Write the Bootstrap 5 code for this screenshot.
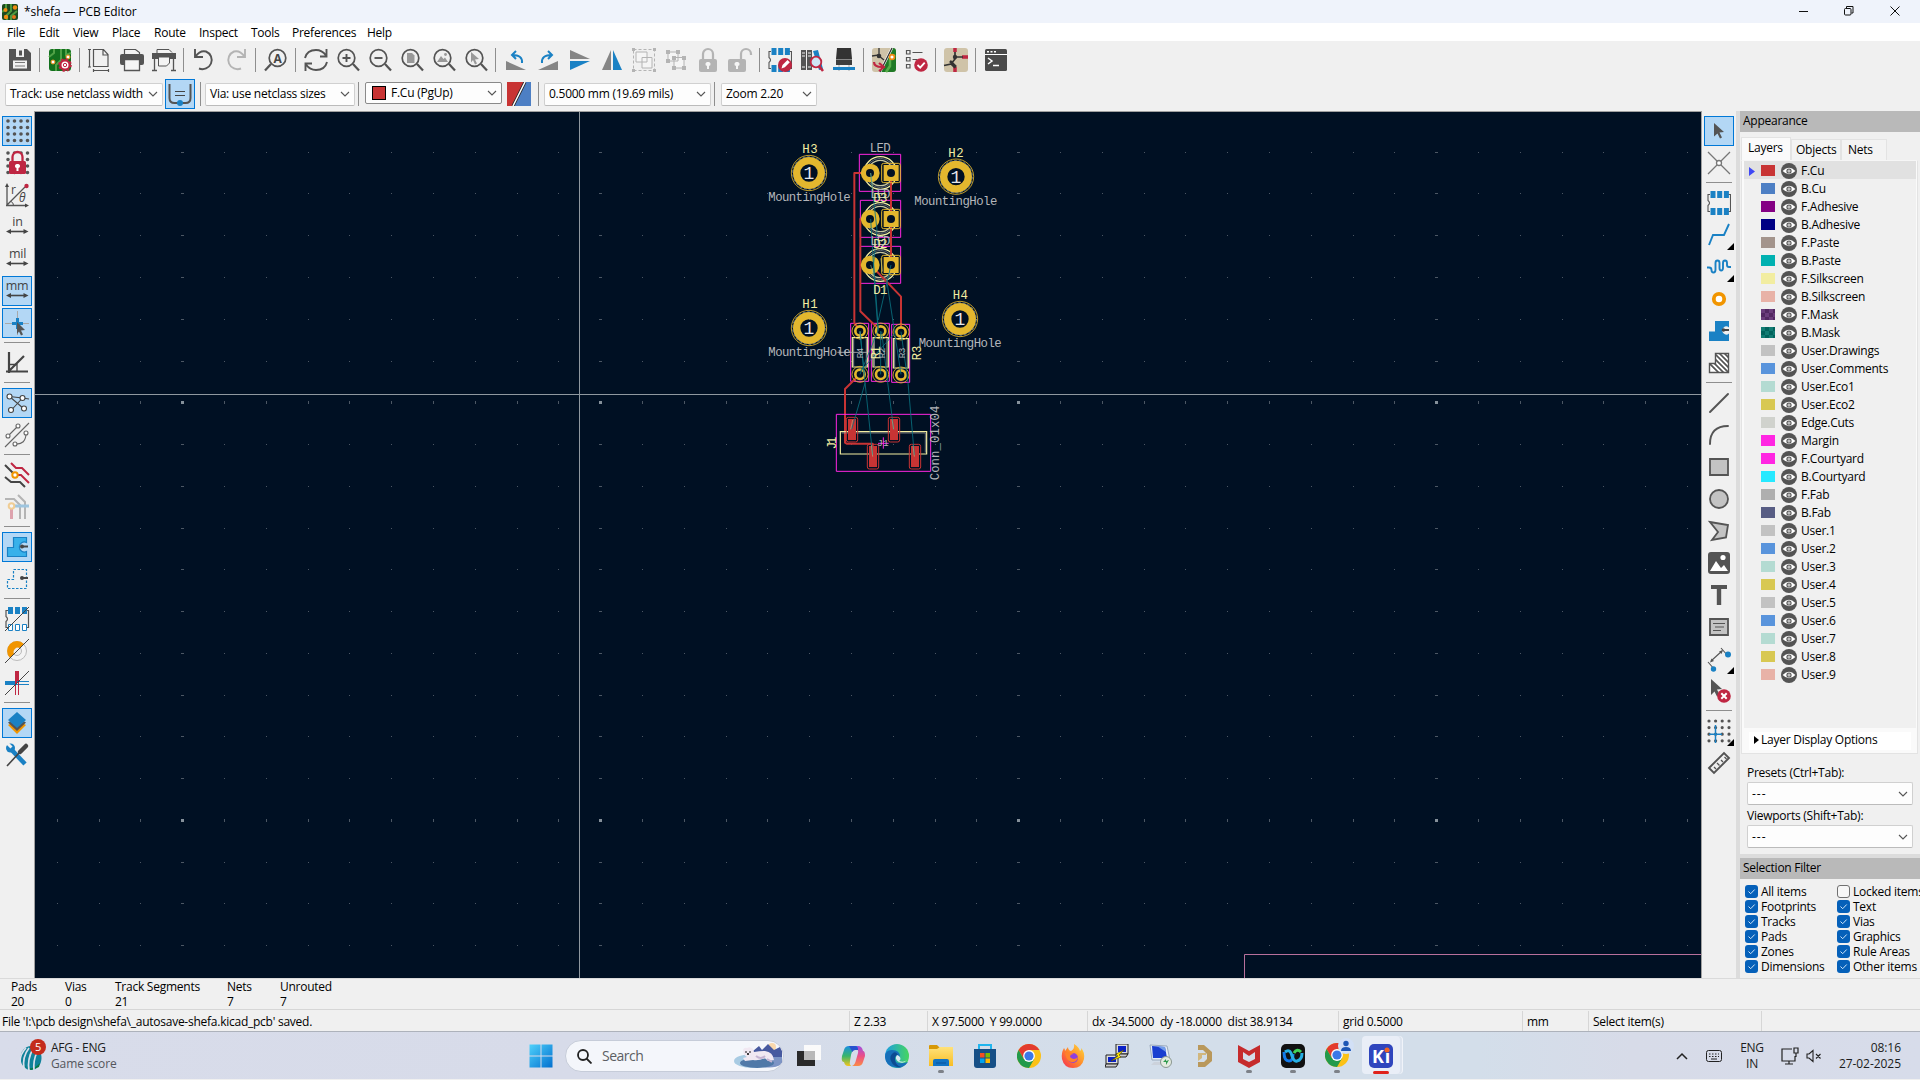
<!DOCTYPE html>
<html lang="en">
<head>
<meta charset="utf-8">
<title>*shefa — PCB Editor</title>
<link href="https://cdn.jsdelivr.net/npm/bootstrap@5.3.0/dist/css/bootstrap.min.css" rel="stylesheet">
<style>
*{box-sizing:border-box}
body{font-family:"Open Sans","Noto Sans",sans-serif;font-size:12px;line-height:16px;color:#000;background:#f0f0f0;width:1920px;height:1080px;overflow:hidden;letter-spacing:-.25px}
svg{display:block;flex:none}
.tool svg{overflow:visible}
.titlebar{height:23px;background:#eff3fb;padding-left:2px}
.titlebar span{margin-left:6px;letter-spacing:-.1px}
.menubar{height:18px;background:#fff;padding:2px 0 0 7px}
.tb-top{height:39px;padding:0 0 2px 4px}
.tb-opts{height:31px;padding:0 0 3px 5px}
.tool{width:32px;height:32px;display:flex;align-items:center;justify-content:center;flex:none}
.dim{opacity:.38}
.vsep{width:8px;flex:none;height:24px;background:linear-gradient(#8e8e8e,#8e8e8e) 3px 0/1px 100% no-repeat}
.hsep{height:8px;width:26px;flex:none;background:linear-gradient(#8e8e8e,#8e8e8e) 0 3px/100% 1px no-repeat}
.lit{background:#b3d7f5;border:1px solid #0078d7;width:30px;height:30px;margin:1px}
.combo{height:23px;background:#fdfdfd;border:1px solid #d0d0d0;border-bottom-color:#bbb;border-radius:2px;padding:0 4px;flex:none;display:flex;align-items:center;justify-content:space-between}
.dashes{letter-spacing:1px}
.work{height:867px}
.leftbar{width:34px;padding-top:4px;align-items:center}
.board{width:1668px;height:868px;border:1px solid #a0a0a0;border-bottom-color:#b5b5b5;background:#001023;flex:none}
.rightbar{width:34px;padding-top:4px;align-items:center}
.rightbar .tool,.leftbar .tool{position:relative}
.more{position:absolute;right:1px;bottom:1px;width:7px;height:7px;background:#000;clip-path:polygon(100% 0,100% 100%,0 100%)}
.sash{width:4px;background:#dcdcdc}
.dock{width:180px}
.dockhead{height:21px;background:#b9b9b9;padding-left:3px;flex:none;line-height:20px}
.tabrow{height:28px;padding:5px 0 0 1px;align-items:flex-end}
.tabx{border:1px solid #e3e3e3;border-bottom:0;height:21px;background:#f3f3f3;padding:2px 0 0 4px}
.tabx.on{background:#fafafa;height:23px;padding:2px 0 0 6px}
.tabbody{margin-left:1px;width:177px;height:594px;background:#fafafa;border:1px solid #e3e3e3;border-top-color:#f6f6f6;padding:0 1px 0 2px}
.layerlist{height:567px;background:#f0f0f0}
.layer{height:18px;padding:2px 0 0 5px}
.layer.on{background:#e1e1e1}
.layer .arrow{width:12px}
.swatch{width:14px;height:11px;margin-right:6px;margin-bottom:2px}
.layer .eye{margin-right:4px}
.ldo{margin:4px 5px 0 5px;height:18px;background:#fff;padding:0 0 2px 5px}
.filter{height:15px}
.filter .half{width:92px;white-space:nowrap;flex:none}
.tick{width:13px;height:13px;border-radius:3px;background:#0560b9;margin-right:3px;flex:none}
.tick.off{background:#f7f7f7;border:1px solid #707070}
.infobar{height:31px;border-top:1px solid #dadada;position:relative;z-index:1;background:#f0f0f0;padding-left:11px;line-height:14.500px;padding-top:1px}
.statusbar{height:23px;border-top:1px solid #d6d6d6;border-bottom:1px solid #adb2bb;line-height:21px}
.statusbar div{border-right:1px solid #d6d6d6;padding-left:4px;margin:1px 0;height:20px;white-space:pre;flex:none;line-height:22px}
.statusbar div:first-child{padding-left:2px}
.taskbar{height:47px;background:linear-gradient(90deg,#d8dcea 0,#d7dbe9 30%,#d3deea 60%,#d3deea 77%,#d7dbe8 85%,#d7dcea 100%);color:#1b1c20}
.weather{width:519px;padding-left:19px}
.app{width:44px;height:47px;display:flex;align-items:center;justify-content:center;position:relative;flex:none}
.app.run::after{content:"";position:absolute;left:19px;bottom:6px;width:6px;height:3px;border-radius:2px;background:#7d8188}
.app.active::before{content:"";position:absolute;left:3px;top:4px;width:38px;height:38px;border-radius:4px;background:#e9eef7;box-shadow:2px 0 #dde4ef,3px 0 #f0f3f9}
.app.active::after{content:"";position:absolute;left:14px;bottom:5px;width:16px;height:3px;border-radius:2px;background:#e0231c}
.app svg{position:relative}
.searchbox{width:219px;height:32px;border-radius:16px;background:#f4f6fb;border:1px solid #c6ccd9;margin:0 3px 0 2px;padding:0 1px 0 11px;color:#5c5e63;font-size:14px;overflow:hidden;letter-spacing:-.5px}
.tray{margin-left:auto;padding-right:19px}
.pcb{font-family:"Liberation Mono",monospace;font-size:37px;letter-spacing:0}
</style>
</head>
<body class="d-flex flex-column">
<svg width="0" height="0" class="position-absolute">
<defs>
<symbol id="eye" viewBox="0 0 16 16"><circle cx="8" cy="8" r="8" fill="#545454"/><path d="M1.600 8Q8 1.600 14.400 8Q8 14.400 1.600 8z" fill="#fff"/><circle cx="8" cy="8" r="2.600" fill="#545454"/><circle cx="8" cy="8" r="1.500" fill="#e8e8e8"/><circle cx="8" cy="8" r=".700" fill="#777"/></symbol>
<symbol id="caret" viewBox="0 0 10 10"><path d="M1 3l4 4 4-4" fill="none" stroke="#555" stroke-width="1.100"/></symbol>
<symbol id="lens" viewBox="0 0 24 24"><circle cx="10.500" cy="10" r="8.300" fill="none" stroke="#545454" stroke-width="1.700"/><path d="M17 16l6 6.500" stroke="#545454" stroke-width="2.200"/></symbol>
<symbol id="chip" viewBox="0 0 24 24"><path d="M3 3.500H1V9.500Q4 12 1 14.500V20.500H3M21 3.500H23.500V20.500H21" fill="none" stroke="#545454" stroke-width="1.100"/><path d="M3.500 0h5v7h-5zM10.200 0h5v7h-5zM16.900 0h5v7h-5zM3.500 17h5v7h-5zM10.200 17h5v7h-5zM16.900 17h5v7h-5z" fill="#1a81c4"/></symbol>
<symbol id="chrome" viewBox="0 0 24 24"><circle cx="12" cy="12" r="12" fill="#fbc116"/><path d="M1.600 6A12 12 0 0 1 22.400 6H12L6.800 15z" fill="#e33b2e"/><path d="M1.600 6A12 12 0 0 0 12 24L17.200 15 12 12 6.800 15z" fill="#229a4b"/><circle cx="12" cy="12" r="5.900" fill="#fff"/><circle cx="12" cy="12" r="4.600" fill="#3b78e7"/></symbol>
<linearGradient id="win" x2="1" y2="1"><stop stop-color="#4fd1fb"/><stop offset="1" stop-color="#0370cf"/></linearGradient>
<linearGradient id="edge" x2="1" y2="0"><stop stop-color="#1b9de2"/><stop offset="1" stop-color="#46d65f"/></linearGradient>
<linearGradient id="fold" x2="0" y2="1"><stop stop-color="#ffe27a"/><stop offset="1" stop-color="#f8bd24"/></linearGradient>
<linearGradient id="cpa" x2="0" y2="1"><stop stop-color="#1b8fe3"/><stop offset=".5" stop-color="#38b56a"/><stop offset="1" stop-color="#f5c51c"/></linearGradient>
<linearGradient id="cpb" x2="0" y2="1"><stop stop-color="#a04fe0"/><stop offset=".5" stop-color="#ec4f87"/><stop offset="1" stop-color="#fb8b45"/></linearGradient>
<linearGradient id="fox" x1="1" x2="0" y2="1"><stop stop-color="#ffdf3c"/><stop offset=".5" stop-color="#ff8a2b"/><stop offset="1" stop-color="#f52a56"/></linearGradient>
</defs>
</svg>

<header class="titlebar d-flex align-items-center">
<svg width="16" height="16" viewBox="0 0 16 16"><rect width="16" height="16" rx="2" fill="#1d4a1f"/><path d="M5 16V11L9 7V0M9 16V12L15 7M0 8L4 5V0" fill="none" stroke="#4c9a3f" stroke-width="2"/><circle cx="3.500" cy="6" r="2" fill="#f08c12"/><circle cx="13" cy="3.500" r="2.200" fill="#f08c12"/><circle cx="4" cy="13" r="2.200" fill="#f08c12"/><circle cx="12" cy="13" r="2" fill="#e2741a"/></svg>
<span>*shefa — PCB Editor</span>
<svg class="ms-auto me-3" width="110" height="20" viewBox="0 0 110 20" fill="none" stroke="#111" stroke-width="1"><path d="M5 9.500h9M96.500 4.500l9 9M105.500 4.500l-9 9"/><rect x="50.500" y="6.500" width="6.500" height="6.500" rx="1"/><path d="M52.500 6V4.500h6.500v6.500H57.500"/></svg>
</header>
<nav class="menubar d-flex align-items-center" id="menubar"></nav>

<section class="tb-top d-flex align-items-center" aria-label="Main toolbar">
<div class="tool"><svg width="24" height="24" viewBox="0 0 24 24"><path d="M1 1h18l4 4v18H1z" fill="#545454"/><path d="M8 1h8v8H8z" fill="#f0f0f0"/><path d="M11 2.500h3v5h-3z" fill="#545454"/><path d="M5 12.500h14v8H5z" fill="#f0f0f0"/><path d="M7 14.500h10M7 18h10" stroke="#777"/></svg></div>
<div class="vsep"></div>
<div class="tool"><svg width="24" height="24" viewBox="0 0 24 24"><rect x="1" y="1" width="22" height="22" rx="3" fill="#12701d"/><path d="M8 23v-6l5-5V1M1 9l5-4V1M18 1v6l5-2" fill="none" stroke="#4fa146" stroke-width="2"/><circle cx="5" cy="14" r="2" fill="#fff" stroke="#f08a12"/><circle cx="20" cy="9" r="2" fill="#fff" stroke="#f08a12"/><circle cx="17" cy="17" r="4.600" fill="#fff" stroke="#bf2642" stroke-width="2.200"/><circle cx="17" cy="17" r="5.800" fill="none" stroke="#bf2642" stroke-width="2" stroke-dasharray="2.300 2.250"/><circle cx="17" cy="17" r="1.700" fill="none" stroke="#bf2642"/></svg></div>
<div class="vsep"></div>
<div class="tool"><svg width="24" height="24" viewBox="0 0 24 24" fill="none" stroke="#545454" stroke-width="1.200"><path d="M5.500 1.500h10l4.500 5v12h-14.500zM15 1.500v5.500h5M1.500 1v18M0 1.500h3M0 19h3M5.500 22.500h15M5.500 21v3M20.500 21v3"/></svg></div>
<div class="tool"><svg width="24" height="24" viewBox="0 0 24 24"><path d="M4.500 6V1.500h11l4 3V6" fill="#f4f4f4" stroke="#545454" stroke-width="1.200"/><rect y="6" width="24" height="11" rx="2" fill="#545454"/><path d="M4.500 11.500h15V22.500h-15z" fill="#f4f4f4" stroke="#545454" stroke-width="1.300"/></svg></div>
<div class="tool"><svg width="24" height="24" viewBox="0 0 24 24"><path d="M5 5V1.500h12l3 3" fill="#f4f4f4" stroke="#545454"/><path d="M0 5h24v6H0z" fill="#545454"/><path d="M2.500 10v13M21.500 10v13M0 22.500h5M19 22.500h5" stroke="#545454" stroke-width="1.300"/><path d="M6.500 9h11v6l-3 3h-8z" fill="#f4f4f4" stroke="#545454"/></svg></div>
<div class="vsep"></div>
<div class="tool"><svg width="24" height="24" viewBox="0 0 24 24" fill="none" stroke="#545454" stroke-width="1.900"><path d="M3 1v8h8M3.500 8.500Q8 2 14 3.500A8.600 8.600 0 1 1 7 20.500"/></svg></div>
<div class="tool dim"><svg width="24" height="24" viewBox="0 0 24 24" fill="none" stroke="#545454" stroke-width="1.900"><path d="M21 1v8h-8M20.500 8.500Q16 2 10 3.500A8.600 8.600 0 1 0 17 20.500"/></svg></div>
<div class="vsep"></div>
<div class="tool"><svg width="24" height="24" viewBox="0 0 24 24"><g transform="matrix(-1 0 0 1 24 0)"><use href="#lens" width="24" height="24"/></g><text x="13.500" y="14.500" text-anchor="middle" font-size="12" font-weight="700" fill="#444">A</text></svg></div>
<div class="vsep"></div>
<div class="tool"><svg width="24" height="24" viewBox="0 0 24 24" fill="none" stroke="#545454" stroke-width="1.900"><path d="M1 10Q3 2 12 2Q18 2 22 7.500M22.500 1v7.500H16M23 14Q21 22 12 22Q6 22 2 16.500M1.500 23v-7.500H8"/></svg></div>
<div class="tool"><svg width="24" height="24"><use href="#lens"/><path d="M6.500 10h8M10.500 6v8" stroke="#545454" stroke-width="1.900"/></svg></div>
<div class="tool"><svg width="24" height="24"><use href="#lens"/><path d="M6.500 10h8" stroke="#545454" stroke-width="1.900"/></svg></div>
<div class="tool"><svg width="24" height="24"><use href="#lens"/><path d="M7 5h5l2.500 2.500V15H7z" fill="#999"/></svg></div>
<div class="tool"><svg width="24" height="24"><use href="#lens"/><path d="M5 14l4-6 2.500 3 1.500-1.500L16 14z" fill="#999"/><circle cx="13.500" cy="6.500" r="1.400" fill="#999"/></svg></div>
<div class="tool"><svg width="24" height="24"><use href="#lens"/><path d="M7 4l8 7-4 .5 2 4-2 1-2-4.500-2 2.500z" fill="#999"/></svg></div>
<div class="vsep"></div>
<div class="tool"><svg width="24" height="24" viewBox="0 0 24 24"><path d="M2 13l20 9H2z" fill="#858585"/><path d="M18 15Q19 7 8 7M12 3L8 7l4 4" fill="none" stroke="#1a81c4" stroke-width="2"/></svg></div>
<div class="tool"><svg width="24" height="24" viewBox="0 0 24 24"><path d="M22 13L2 22h20z" fill="#858585"/><path d="M6 15Q5 7 16 7M12 3l4 4-4 4" fill="none" stroke="#1a81c4" stroke-width="2"/></svg></div>
<div class="tool"><svg width="24" height="24" viewBox="0 0 24 24"><path d="M2 2l20 9H2z" fill="#858585"/><path d="M2 22l20-9H2z" fill="#1a81c4"/></svg></div>
<div class="tool"><svg width="24" height="24" viewBox="0 0 24 24"><path d="M2 22L11 2v20z" fill="#858585"/><path d="M22 22L13 2v20z" fill="#1a81c4"/></svg></div>
<div class="tool dim"><svg width="24" height="24" viewBox="0 0 24 24" stroke="#545454"><path d="M1.500 1.500h21v21h-21z" fill="none" stroke-dasharray="3 2"/><path d="M4 4h11v10H4zM10 9.500h10V20H10z" fill="#fff"/><path d="M0 0h3v3H0zM21 0h3v3h-3zM0 21h3v3H0zM21 21h3v3h-3z" fill="#545454" stroke="none"/></svg></div>
<div class="tool dim"><svg width="24" height="24" viewBox="0 0 24 24" stroke="#545454"><path d="M4 4h10v9H4zM10 9.500h10V20H10z" fill="#fff"/><path d="M2 2h4v4H2zM12 2h4v4h-4zM2 11h4v4H2zM8 8h4v4H8zM18 8h4v4h-4zM8 18h4v4H8zM18 18h4v4h-4z" fill="#545454" stroke="none"/></svg></div>
<div class="tool dim"><svg width="24" height="24" viewBox="0 0 24 24"><path d="M7 12V6a5 5 0 0 1 10 0v6" fill="none" stroke="#545454" stroke-width="2.200"/><rect x="3" y="11" width="18" height="13" rx="2" fill="#545454"/><path d="M12 14a2 2 0 0 1 1 4v3h-2v-3a2 2 0 0 1 1-4" fill="#fff"/></svg></div>
<div class="tool dim"><svg width="24" height="24" viewBox="0 0 24 24"><path d="M13 12V6a5 5 0 0 1 10 0v1" fill="none" stroke="#545454" stroke-width="2.200"/><rect x="0" y="11" width="18" height="13" rx="2" fill="#545454"/><path d="M9 14a2 2 0 0 1 1 4v3H8v-3a2 2 0 0 1 1-4" fill="#fff"/></svg></div>
<div class="vsep"></div>
<div class="tool"><svg width="24" height="24" viewBox="0 0 24 24"><use href="#chip"/><circle cx="17" cy="17" r="7" fill="#bf2642"/><path d="M13.500 20.500l1-3.500 5-5 2.300 2.300-5 5z" fill="#fff"/></svg></div>
<div class="tool"><svg width="24" height="24" viewBox="0 0 24 24"><path d="M1 2h5v20H1zM7 2h5v20H7z" fill="#545454"/><path d="M2 5h3M2 8h3M8 5h3M8 8h3M2 19h3M8 19h3" stroke="#eee"/><path d="M13 3l5-1 5 19-4 1z" fill="#1a81c4"/><circle cx="16" cy="14" r="5.300" fill="#cfe6f5" stroke="#bf2642" stroke-width="1.800"/><path d="M19 18l4 5" stroke="#bf2642" stroke-width="2.600"/></svg></div>
<div class="tool"><svg width="24" height="24" viewBox="0 0 24 24"><path d="M7 17v6M17 17v6" stroke="#aaa"/><path d="M5 0h14l1 11H4z" fill="#333"/><path d="M4 11h16v6H4z" fill="#3d3d3d"/><path d="M4 11.500h16" stroke="#888"/><path d="M1 19h22v3H1z" fill="#1a81c4"/></svg></div>
<div class="vsep"></div>
<div class="tool"><svg width="24" height="24" viewBox="0 0 24 24"><rect width="24" height="24" rx="3" fill="#cfc3a8"/><path d="M20 0h1a3 3 0 0 1 3 3v18a3 3 0 0 1-3 3H8z" fill="#1f7a26"/><path d="M14 24l4-6v-7l5-4" fill="none" stroke="#58ad4a" stroke-width="2.500"/><path d="M20 0L8 24" stroke="#fff" stroke-width="2.500"/><path d="M20 0L8 24M7 0v7l-7 1M7 8l5 4" fill="none" stroke="#333" stroke-width="1.300"/><circle cx="7" cy="8" r="2.300" fill="#333"/><circle cx="20" cy="9" r="2.400" fill="#fff" stroke="#f08a12" stroke-width="1.700"/><path d="M2 14q0 5 8 5M7 15l5 4-5 4" fill="none" stroke="#bf2642" stroke-width="2.200"/></svg></div>
<div class="tool"><svg width="24" height="24" viewBox="0 0 24 24"><path d="M2.500 2.500h3.500v3.500H2.500zM2.500 9.500h3.500v3.500H2.500zM2.500 16.500h3.500v3.500H2.500zM8.500 4.500h10M8.500 11.500h5" fill="none" stroke="#545454" stroke-width="1.200"/><circle cx="17" cy="17" r="6.800" fill="#bf2642"/><path d="M13.500 17l2.700 2.700 4.500-5" fill="none" stroke="#fff" stroke-width="1.800"/></svg></div>
<div class="vsep"></div>
<div class="tool"><svg width="24" height="24" viewBox="0 0 24 24"><rect width="24" height="24" rx="3" fill="#cfc3a8"/><path d="M11 0v4M18 9h6M11 19v5" fill="none" stroke="#bf2642" stroke-width="3.500"/><path d="M11 4v7L7 16 0 17.500M7 16l4 4M11 9h8" fill="none" stroke="#333" stroke-width="1.700"/><circle cx="11" cy="9" r="2.200" fill="#333"/><path d="M6 13l6 6" stroke="#333" stroke-width="2.500"/></svg></div>
<div class="vsep"></div>
<div class="tool"><svg width="24" height="24" viewBox="0 0 24 24"><rect x="1" y="1" width="22" height="22" rx="1.500" fill="#4a4a4a"/><path d="M3 3h2v1.500H3zM6.500 3h2v1.500h-2zM10 3h2v1.500h-2zM1 6h22v1H1z" fill="#fff"/><path d="M4 10l4 3-4 3M9 17.500h6" fill="none" stroke="#fff" stroke-width="1.500"/></svg></div>
</section>

<section class="tb-opts d-flex align-items-center" aria-label="Track options">
<div class="combo" style="width:158px"><span>Track: use netclass width</span><svg width="10" height="10"><use href="#caret"/></svg></div>
<div class="tool lit" style="margin:0 0 0 2px"><svg width="24" height="24" viewBox="0 0 24 24"><path d="M1.500 2v14q0 5 5 5h11q5 0 5-5V2" fill="none" stroke="#545454" stroke-width="2"/><path d="M7 9.500h10M7 13.500h10" stroke="#444"/><circle cx="12" cy="21" r="3" fill="#1a81c4"/></svg></div>
<div class="vsep" style="margin-left:2px"></div><div class="combo" style="width:150px"><span>Via: use netclass sizes</span><svg width="10" height="10"><use href="#caret"/></svg></div>
<div class="vsep"></div>
<div class="combo" style="width:137px;margin-left:2px;border-color:#8a8a8a;padding-left:6px;height:22px;margin-bottom:2px"><span class="d-flex align-items-center"><i style="width:14px;height:14px;background:#c83434;border:1px solid #000;margin-right:5px"></i>F.Cu (PgUp)</span><svg width="10" height="10"><use href="#caret"/></svg></div>
<svg width="24" height="24" viewBox="0 0 24 24" style="margin:0 4px 0 5px"><path d="M0 0h24v24H0z" fill="#4d7fc4"/><path d="M0 0h18L6 24H0z" fill="#c83434"/><path d="M18 0L6 24" stroke="#222" stroke-width="3"/><path d="M18 0L6 24" stroke="#fff" stroke-width="1.500"/></svg>
<div class="vsep"></div><div class="combo" style="width:167px;margin-left:1px"><span>0.5000 mm (19.69 mils)</span><svg width="10" height="10"><use href="#caret"/></svg></div>
<div class="vsep"></div><div class="combo" style="width:96px;margin-left:2px"><span>Zoom 2.20</span><svg width="10" height="10"><use href="#caret"/></svg></div>
</section>

<main class="work d-flex">
<aside class="leftbar d-flex flex-column">
<div class="tool lit"><svg width="24" height="24"><path d="M3 2v22M9.500 2v22M16 2v22M22.500 2v22" fill="none" stroke="#545454" stroke-width="3.600" stroke-linecap="round" stroke-dasharray="0 6.500"/></svg></div>
<div class="tool"><svg width="24" height="24"><path d="M3 2v22M9.500 2v22M16 2v22M22.500 2v22" stroke="#545454" stroke-width="3.600" stroke-linecap="round" stroke-dasharray="0 6.500"/><path d="M7.500 10V6a5 5 0 0 1 10 0v4" fill="#f0f0f0" stroke="#bf2642" stroke-width="2.300"/><rect x="4" y="10" width="17" height="13" rx="1.500" fill="#bf2642"/><path d="M12.500 13a2 2 0 0 1 1 4v3h-2v-3a2 2 0 0 1 1-4" fill="#fff"/></svg></div>
<div class="tool"><svg width="24" height="24"><path d="M2 23V3M1 22.500h21M2 22L20 4" stroke="#545454" stroke-width="1.300"/><path d="M2 0l2 4H0zM24 22.500l-4-2v4z" fill="#444"/><path d="M6 18.500q2.500 1 2.500 4" fill="none" stroke="#545454"/><circle cx="21.500" cy="3" r="2.200" fill="#bf2642"/><text x="6" y="11" font-size="12" fill="#444">r</text><text x="14" y="19" font-size="12" font-style="italic" fill="#444">θ</text></svg></div>
<div class="tool"><svg width="24" height="24"><text x="12.500" y="11" text-anchor="middle" font-size="12.500" fill="#444">in</text><path d="M4 16.500h17" stroke="#444" stroke-width="1.600"/><path d="M1 16.500l5-2.500v5zM23.500 16.500l-5-2.500v5z" fill="#444"/></svg></div>
<div class="tool"><svg width="24" height="24"><text x="12.500" y="11" text-anchor="middle" font-size="12.500" fill="#444">mil</text><path d="M4 16.500h17" stroke="#444" stroke-width="1.600"/><path d="M1 16.500l5-2.500v5zM23.500 16.500l-5-2.500v5z" fill="#444"/></svg></div>
<div class="tool lit"><svg width="24" height="24"><text x="12" y="11" text-anchor="middle" font-size="12.500" fill="#444">mm</text><path d="M4 16.500h17" stroke="#444" stroke-width="1.600"/><path d="M1 16.500l5-2.500v5zM23.500 16.500l-5-2.500v5z" fill="#444"/></svg></div>
<div class="tool lit"><svg width="24" height="24"><path d="M12.500 0v24M0 12.500h24" stroke="#a8a8a8"/><path d="M12.500 7v11M7 12.500h11" stroke="#1a81c4" stroke-width="3"/><path d="M12 11l8 8-4 .500 2 4-2 1-2-4-2 2.500z" fill="#545454"/></svg></div>
<div class="hsep"></div>
<div class="tool"><svg width="24" height="24" fill="none" stroke="#444"><path d="M4 1v21M1 20.500h22M4 20L19 5" stroke-width="2.200"/><path d="M4 13.500h8v7" stroke-width="1.300"/></svg></div>
<div class="hsep"></div>
<div class="tool lit"><svg width="24" height="24" fill="#fff" stroke="#444" stroke-width="1.100"><path d="M4.500 5.500L17.500 7l6.500 1M4.500 5.500L18.500 17.500M17.500 7L6 19.500" fill="none"/><circle cx="4.500" cy="5.500" r="2.500"/><circle cx="17.500" cy="7" r="2.500"/><circle cx="19" cy="17.500" r="2.500"/><circle cx="6" cy="19" r="2.500"/></svg></div>
<div class="tool"><svg width="24" height="24" fill="#fff" stroke="#666" stroke-width="1.100"><path d="M0 24L24 0M3 13L13 3M10 21Q21 22 21 10" fill="none"/><circle cx="3" cy="13" r="2"/><circle cx="13" cy="3" r="2"/><circle cx="21" cy="10" r="2"/><circle cx="10" cy="21" r="2"/></svg></div>
<div class="hsep"></div>
<div class="tool"><svg width="24" height="24" fill="none" stroke-width="2"><path d="M0 2l10 10M0 14l6 5h9l5 5" stroke="#444"/><path d="M6 0l5 5h6l7 7M10 12h6l8 8" stroke="#bf2642"/><circle cx="10" cy="12" r="2.700" fill="#fff" stroke="#f19500"/></svg></div>
<div class="tool dim"><svg width="24" height="24" fill="none" stroke-width="2"><path d="M0 4h9l6 6v14M13 0l7 7v17" stroke="#545454"/><path d="M8 11h16" stroke="#1a81c4" stroke-width="3"/><path d="M6.500 12v12" stroke="#bf2642" stroke-width="3"/><circle cx="6.500" cy="11" r="2.800" fill="#fff" stroke="#f19500"/></svg></div>
<div class="hsep"></div>
<div class="tool lit"><svg width="24" height="24"><path d="M8.500 2.500h13v5a5 5 0 1 0 0 9v5h-19v-9h6z" fill="#38b1ea" stroke="#1a81c4" stroke-width="1.200"/><path d="M17 11.500h6" stroke="#444" stroke-width="2"/><circle cx="17" cy="11.500" r="2" fill="#444"/></svg></div>
<div class="tool"><svg width="24" height="24"><path d="M8.500 2.500h13v19h-19v-9h6z" fill="none" stroke="#1a81c4" stroke-width="1.200" stroke-dasharray="2.500 1.500"/><path d="M17 11h6" stroke="#444" stroke-width="2"/><circle cx="17" cy="11" r="2" fill="#444"/></svg></div>
<div class="hsep"></div>
<div class="tool"><svg width="24" height="24"><path d="M3 3.500H1v6q3 2.500 0 5V20.500h2M21 3.500h2.500v17H21" fill="none" stroke="#545454" stroke-width="1.200"/><path d="M3 0h5v7H3zM10 0h5v7h-5zM17 0h5v7h-5z" fill="#1a81c4"/><path d="M3.500 17.500h4v6h-4zM10.500 17.500h4v6h-4zM17.500 17.500h4v6h-4z" fill="#fff" stroke="#1a81c4"/><path d="M0 24L24 0" stroke="#444"/></svg></div>
<div class="tool"><svg width="24" height="24"><circle cx="12" cy="12" r="9.500" fill="#f4f4f4" stroke="#bbb"/><circle cx="12" cy="12" r="4.500" fill="#f0f0f0" stroke="#bbb"/><path d="M5 19A9.800 9.800 0 0 1 19 5L15 9a4.500 4.500 0 0 0-6 6z" fill="#f19500"/><path d="M0 24L24 0" stroke="#444"/></svg></div>
<div class="tool"><svg width="24" height="24"><path d="M0 12h12" stroke="#1a81c4" stroke-width="4"/><path d="M12 0v12" stroke="#bf2642" stroke-width="4"/><path d="M12 10.500h12M12 13.500h12" stroke="#1a81c4"/><path d="M10.500 12v12M13.500 12v12" stroke="#bf2642"/><path d="M0 24L24 0" stroke="#444"/></svg></div>
<div class="hsep"></div>
<div class="tool lit"><svg width="24" height="24"><path d="M3 14l9 9 9-9-9-5z" fill="#f19500"/><path d="M3 11.500l9 8.500 9-8.500-9-5z" fill="#545454"/><path d="M12 1l9 8-9 8-9-8z" fill="#1a81c4"/></svg></div>
<div class="tool"><svg width="24" height="24"><path d="M4 4l16 17" stroke="#1a81c4" stroke-width="4.500"/><circle cx="5.500" cy="5" r="4.500" fill="#1a81c4"/><path d="M2 0l4.500 4.500" stroke="#f0f0f0" stroke-width="3"/><path d="M2 23L14 10" stroke="#444" stroke-width="1.600"/><path d="M15 9l6-6" stroke="#444" stroke-width="4.500" stroke-linecap="round"/></svg></div>
</aside>

<div class="board"><svg class="pcb" width="1666" height="866" viewBox="35 112 1666 866">
<path id="gridDots" fill="#4c5764" shape-rendering="crispEdges"/><path id="majorDots" fill="#85909a" shape-rendering="crispEdges"/>
<path d="M1244.500 978V954.500H1701" fill="none" stroke="#b8709c"/>
<path d="M35 394.500H1701M579.500 112V978" stroke="#8f989f" stroke-width="1"/>
<g transform="translate(750 130) scale(.33333)" fill="none">
 <g id="holes"></g>
 <g id="leds"></g>
 <g id="resistors"></g>
 <g stroke="#c83434" stroke-width="6" stroke-linejoin="round"><path d="M360 129H313V580L330 600M331 265V544L392 603M423 129V405M362 405L453 500V605M330 733L285 777V938L290 941H368V970"/></g>
 <g stroke="#ff26e2" stroke-width="3"><path d="M259 853H542V1024H259z"/></g>
 <g stroke="#f2eda1" stroke-width="3.500"><path d="M271 905H530V972H271z"/></g><path d="M275 909H526V968" stroke="#aaa" stroke-width="2"/>
 <g id="smd"></g>
 <g id="padsTop"></g>
 <g stroke="#0a7180" stroke-width="2.500"><path d="M362 129L381 300 371 400 385 600 330 733M362 267L375 480 384 600M423 405L385 570M410 450L453 733M432 612L330 725M330 603L345 760 305 898M345 757L368 975M395 605L413 757 431 898M392 603V733M453 605L474 757 493 975M330 603L343 733"/></g>
 <path d="M362 129L370 190M362 405L372 440M302 898L308 870M431 898L426 868M368 980L364 945M493 980L489 946M330 630V605M398 425L392 385" stroke="#b9c98a" stroke-width="2" opacity=".8"/>
 <path d="M400 922V956M384 940H416" stroke="#ff26e2" stroke-width="3"/>
 <g fill="#b4b6ba">
  <text x="359" y="67" textLength="63">LED</text><text x="361" y="205" textLength="60">LED</text><text x="361" y="344" textLength="60">LED</text>
  <text x="55" y="214" textLength="247">MountingHole</text><text x="493" y="226" textLength="249">MountingHole</text><text x="55" y="678" textLength="247">MountingHole</text><text x="506" y="652" textLength="249">MountingHole</text>
  <text transform="translate(566 1051) rotate(-90)" textLength="224">Conn_01x04</text>
  <g font-size="28"><text transform="translate(339 685) rotate(-90)" textLength="32">R4</text><text transform="translate(405 685) rotate(-90)" textLength="32">R2</text><text transform="translate(465 685) rotate(-90)" textLength="32">R3</text><path d="M262 667H352M268 660v14M286 660v14" stroke="#b4b6ba" stroke-width="2.500"/><text x="382" y="949">J1</text></g>
 </g>
 <g fill="#f2eda1">
  <text x="157" y="68" textLength="46">H3</text><text x="595" y="81" textLength="46">H2</text><text x="157" y="533" textLength="46">H1</text><text x="608" y="507" textLength="46">H4</text>
  <text x="370" y="216" textLength="42">D3</text><text x="370" y="354" textLength="42">D2</text><text x="370" y="492" textLength="42">D1</text>
  <text transform="translate(390 688) rotate(-90)" textLength="40">R1</text><text transform="translate(514 691) rotate(-90)" textLength="44">R3</text><text transform="translate(258 958) rotate(-90)" textLength="38">J1</text>
 </g>
</g></svg></div>

<aside class="rightbar d-flex flex-column">
<div class="tool lit"><svg width="24" height="24"><path d="M7 4l10 9-4.500.500 2.500 5-2 1-2.500-5-3.500 3z" fill="#545454"/></svg></div>
<div class="tool"><svg width="24" height="24" fill="none" stroke="#777" stroke-width="1.300"><path d="M1 1l9 9M23 1l-9 9M1 23l9-9M23 23l-9-9"/><circle cx="12" cy="12" r="2.500" fill="#fff"/></svg></div>
<div class="hsep"></div>
<div class="tool"><svg width="24" height="24"><use href="#chip"/></svg></div>
<div class="tool"><svg width="24" height="24"><path d="M2 22L6 12H17L22 1" fill="none" stroke="#1a81c4" stroke-width="1.900"/></svg><i class="more"></i></div>
<div class="tool"><svg width="24" height="24"><path d="M0 12.500h2q2.500 0 2.500 2.500t2 2.500 2-3V8q0-2.500 2-2.500T12.500 8v5q0 2.500 1.700 2.500T16 13V8q0-2.500 2-2.500T20 8v2q0 2 2 2h2" fill="none" stroke="#1a81c4" stroke-width="1.900"/></svg><i class="more"></i></div>
<div class="tool"><svg width="24" height="24"><circle cx="12" cy="12" r="5.200" fill="#fff" stroke="#f19500" stroke-width="3.800"/></svg></div>
<div class="tool"><svg width="24" height="24"><path d="M8 2h14v6.500a4 4 0 1 0 0 6V22H2v-9.500h6z" fill="#1a81c4"/><path d="M16 11h6" stroke="#444" stroke-width="2"/><circle cx="16.500" cy="11" r="1.800" fill="#444"/></svg></div>
<div class="tool"><svg width="24" height="24"><defs><clipPath id="zoneClip"><path d="M8.500 2.500h13v19h-19v-9h6z"/></clipPath></defs><path d="M8.500 2.500h13v19h-19v-9h6z" fill="#fff" stroke="#545454" stroke-width="1.400"/><path clip-path="url(#zoneClip)" d="M-8 2L14 24M-3 2L19 24M2 2L24 24M7 2L29 24M12 2L34 24M17 2L39 24" stroke="#545454" stroke-width="1.700"/></svg></div>
<div class="hsep"></div>
<div class="tool"><svg width="24" height="24"><path d="M3 21L21 3" stroke="#545454" stroke-width="1.900" stroke-linecap="round"/></svg></div>
<div class="tool"><svg width="24" height="24"><path d="M3 21Q3 3 21 3" fill="none" stroke="#545454" stroke-width="1.900" stroke-linecap="round"/></svg></div>
<div class="tool"><svg width="24" height="24"><path d="M3 4h18v16H3z" fill="#c3c3c3" stroke="#545454" stroke-width="1.800"/></svg></div>
<div class="tool"><svg width="24" height="24"><circle cx="12" cy="12" r="9" fill="#c3c3c3" stroke="#545454" stroke-width="1.800"/></svg></div>
<div class="tool"><svg width="24" height="24"><path d="M3 3l18 3-2 12.500L5 21l6-8z" fill="#c3c3c3" stroke="#545454" stroke-width="1.800"/></svg></div>
<div class="tool"><svg width="24" height="24"><rect x="1" y="1" width="22" height="22" rx="3" fill="#545454"/><path d="M3 20l6-10 5 7 3-3 4 6z" fill="#fff"/><circle cx="16" cy="6.500" r="2.600" fill="#fff"/></svg></div>
<div class="tool"><svg width="24" height="24"><path d="M4 2h16v4h-5.800v16H9.800V6H4z" fill="#545454"/></svg></div>
<div class="tool"><svg width="24" height="24"><path d="M3 4h18v16H3z" fill="#c3c3c3" stroke="#545454" stroke-width="1.800"/><path d="M6 8.500h12M8 12h9M6 15.500h8" stroke="#545454" stroke-width="1.100"/></svg></div>
<div class="tool"><svg width="24" height="24"><path d="M1 15l7 8M14 1l7 8M4 14L15 4" stroke="#545454" stroke-width="1.100" fill="none"/><path d="M3 15.500l1.500-4 2.500 2.500zM16 3l-4 1.500 2.500 2.500z" fill="#545454"/><circle cx="21" cy="7.500" r="3" fill="#1a81c4"/><circle cx="6.500" cy="22" r="2.700" fill="#1a81c4"/></svg><i class="more"></i></div>
<div class="tool"><svg width="24" height="24"><path d="M4 0l11 10-5 .500 3 6-3 1-2.500-5L4 16z" fill="#545454"/><circle cx="17" cy="17" r="6.800" fill="#bf2642"/><path d="M14.300 14.300l5.400 5.400M19.700 14.300l-5.400 5.400" stroke="#fff" stroke-width="2"/></svg></div>
<div class="hsep"></div>
<div class="tool"><svg width="24" height="24"><path d="M2 2v22M8.600 2v22M15.200 2v22M22 2v22" stroke="#545454" stroke-width="3.200" stroke-linecap="round" stroke-dasharray="0 6.600"/><path d="M8.500 6v18M2 15.200h13" stroke="#1a81c4" stroke-width="1.500"/></svg><i class="more"></i></div>
<div class="tool"><svg width="24" height="24"><path d="M2 17L17 2l5 5L7 22z" fill="#f0f0f0" stroke="#545454" stroke-width="1.900"/><path d="M7.500 16.500l-2-2M11 13l-2.500-2.500M14.500 9.500l-2-2M18 6.500l-2-2" stroke="#545454" stroke-width="1.300" transform="translate(1.500 1.500)"/></svg></div>
</aside>
<div class="sash"></div>
<aside class="dock d-flex flex-column">
<div class="dockhead">Appearance</div>
<div class="tabrow d-flex"><div class="tabx on" style="width:50px">Layers</div><div class="tabx" style="width:50px">Objects</div><div class="tabx" style="width:46px;padding-left:6px">Nets</div></div>
<div class="tabbody"><div class="layerlist" id="layers"></div><div class="ldo d-flex align-items-center"><svg width="5" height="8"><path d="M0 0l5 4-5 4z"/></svg><span style="margin-left:2px">Layer Display Options</span></div></div>
<div style="padding:11px 7px 0 7px;height:100px">
<div>Presets (Ctrl+Tab):</div><div class="combo" style="margin-top:1px"><span class="dashes">---</span><svg width="10" height="10"><use href="#caret"/></svg></div>
<div style="margin:3px 0 1px">Viewports (Shift+Tab):</div><div class="combo"><span class="dashes">---</span><svg width="10" height="10"><use href="#caret"/></svg></div>
</div>
<div style="height:4px;background:#dcdcdc"></div>
<div class="dockhead">Selection Filter</div>
<div id="filters" style="padding:5px 0 0 5px"></div>
</aside>
</main>

<section class="infobar d-flex">
<div style="width:54px">Pads<br>20</div><div style="width:50px">Vias<br>0</div><div style="width:112px">Track Segments<br>21</div><div style="width:53px">Nets<br>7</div><div>Unrouted<br>7</div>
</section>
<section class="statusbar d-flex"><div style="width:850px">File 'I:\pcb design\shefa\_autosave-shefa.kicad_pcb' saved.</div><div style="width:78px">Z 2.33</div><div style="width:160px">X 97.5000  Y 99.0000</div><div style="width:251px">dx -34.5000  dy -18.0000  dist 38.9134</div><div style="width:184px">grid 0.5000</div><div style="width:66px">mm</div><div style="width:173px">Select item(s)</div></section>

<footer class="taskbar d-flex align-items-center">
<div class="weather d-flex align-items-center">
<svg width="28" height="36" viewBox="0 0 28 36"><ellipse cx="12" cy="20" rx="10.500" ry="12" fill="#10829a"/><path d="M3 26Q12 35 21 25L20 29 12 32z" fill="#087b45"/><path d="M5 31Q3 19 10 10M10 33Q8 21 14 11M15 32Q14 23 18 14M1 24Q1 16 7 10" fill="none" stroke="#d9dfeb" stroke-width="1.700"/><circle cx="19" cy="9" r="8" fill="#c42b1c"/><text x="19" y="13" text-anchor="middle" font-size="11" fill="#fff">5</text></svg>
<div class="ms-1"><div>AFG - ENG</div><div style="color:#54565c;letter-spacing:-.1px">Game score</div></div></div>
<div class="app"><svg width="24" height="24"><path d="M.500.500h11v11h-11zM12.500.500h11v11h-11zM.500 12.500h11v11h-11zM12.500 12.500h11v11h-11z" fill="url(#win)"/></svg></div>
<div class="searchbox d-flex align-items-center"><svg width="15" height="16" fill="none" stroke="#222" stroke-width="1.800"><circle cx="6" cy="7" r="5"/><path d="M9.500 10.500l5 5"/></svg><span style="margin-left:10px">Search</span>
<svg class="ms-auto" width="49" height="26" viewBox="0 0 49 26"><circle cx="39" cy="4" r="4" fill="#fad8ac"/><path d="M20 8l6-5 3 4 6-6 6 6 6-3 2 4v12H20z" fill="#47599f"/><path d="M30 14h19v7q-8 5-19 3z" fill="#7d94c5"/><ellipse cx="20" cy="18" rx="19" ry="7" fill="#a8cbe3"/><ellipse cx="24" cy="20" rx="17" ry="5" fill="#5079a8"/><path d="M10 7q1-3 4-2 3-2 6 1l1 3q6-1 11-1 8 1 9 9l-6 1-3-3q-6 3-12 2l-8 1-2-3 4-1q-4-2-4-7z" fill="#f1e8f2"/><path d="M23 13q5 4 9 0M34 16l5 3" fill="none" stroke="#c5b3d2" stroke-width="2"/><circle cx="13" cy="9" r=".800"/><circle cx="17" cy="9" r=".800"/><circle cx="15" cy="11" r="1"/></svg></div>
<div class="app"><svg width="24" height="24"><path d="M7 1h17v15H7z" fill="#fafafa"/><path d="M0 7h18v15H0z" fill="#2a2a2a"/><path d="M7 7h11v9H7z" fill="#b9b9b9"/></svg></div>
<div class="app"><svg width="24" height="24"><path d="M14 2h3q4 0 5 5 2 0 2 5l-2 6q-1 4-5 4h-6q3-1 4-6l2-7q1-3-3-7z" fill="url(#cpb)"/><path d="M10 22H7q-3 0-4-4-3 0-2-6l2-6q1-4 5-4h6q3 0 3 4h-3q-3 0-4 5L9 17q-1 3 1 5z" fill="url(#cpa)"/><path d="M8 2h6q3 0 3 4h-3q-2 0-2.500 2z" fill="#2752cf"/></svg></div>
<div class="app"><svg width="24" height="24"><circle cx="12" cy="12" r="12" fill="url(#edge)"/><path d="M0 13Q0 6 7 6q8 0 8 7-3-3-5 0-1 9 13 5-6 8-14 5Q1 22 0 13" fill="#176fb9"/><path d="M8 9q-4 3-2 8 3 7 10 6-6-2-6-8 0-4 3-4-2-4-5-2" fill="#0d4b92"/><path d="M14 12q3 3 0 5 5 2 8-1-3 4-8 2-5-3-2-7z" fill="#dce8f2"/></svg></div>
<div class="app run"><svg width="24" height="24"><path d="M0 2q0-1 1-1h7l3 3v4H0z" fill="#d79806"/><path d="M0 5h8l3-2h13v19H0z" fill="url(#fold)"/><path d="M4 22v-5q0-2 2-2h12q2 0 2 2v5z" fill="#1173c4"/><path d="M7 19h10" stroke="#0a529b"/></svg></div>
<div class="app"><svg width="24" height="24"><path d="M6 6V1h12v5" fill="none" stroke="#20b5ee" stroke-width="2"/><path d="M1 5h22v16q0 3-3 3H4q-3 0-3-3z" fill="#164f86"/><path d="M7 9h4.500v4.500H7z" fill="#f25022"/><path d="M12.500 9H17v4.500h-4.500z" fill="#7fba00"/><path d="M7 14.500h4.500V19H7z" fill="#00a4ef"/><path d="M12.500 14.500H17V19h-4.500z" fill="#ffb900"/></svg></div>
<div class="app"><svg width="24" height="24"><use href="#chrome"/></svg></div>
<div class="app"><svg width="24" height="24"><path d="M13 0q5 3 6 7 2-1 1-3 4 4 3 11-2 9-11 9T1 15Q0 9 3 4q1 1 1 3l3-4q0 3 3 4 4-2 3-7z" fill="url(#fox)"/><circle cx="12" cy="14" r="5" fill="#8d3fe0"/><path d="M4 9q5-2 9 1-4 0-4 3 4 4 8 0-1 6-7 5-5-2-6-9" fill="#ff812b"/></svg></div>
<div class="app"><svg width="24" height="24"><path d="M11 0h12v10H11zM1 11h12v9H1z" fill="#ddd" stroke="#222"/><path d="M13 2h8v6h-8zM3 13h8v5H3z" fill="#0920c7"/><path d="M11 10h12l-2 3h-10zM1 20h12l-2 3H0z" fill="#ccc" stroke="#222"/><path d="M19 6l-8 4 2 2-7 5 10-4-2-2z" fill="#ffe600" stroke="#554b00" stroke-width=".600"/></svg></div>
<div class="app"><svg width="24" height="24"><path d="M1 1l17 1 3 14H3z" fill="#e7eef7" stroke="#9aa9bb"/><path d="M3 2l13 1 2 11H4z" fill="#1a3fd0"/><path d="M8 2l8 1 1 5z" fill="#729ce9"/><path d="M5 18h9v3H2z" fill="#ccd2db"/><circle cx="17" cy="18" r="5.500" fill="#e3eadf" stroke="#8a9690"/><path d="M14 18l3-3v3zM17 21l3-5-3 1z" fill="#2f9a4c"/></svg></div>
<div class="app"><svg width="24" height="24"><path d="M5 1h6l8 7v9l-7 6H5v-5h6l3-3v-5l-4-4H5z" fill="#b9985b"/><path d="M5 9h8v2H9v3l-4 3z" fill="#d1b77e"/></svg></div>
<div class="app run"><svg width="24" height="24"><path d="M1 1l11 6L23 1v17l-11 6-11-6z" fill="#c62b2c"/><path d="M6 8l6 4 6-4v7l-6 3-6-3z" fill="#d4dde9"/></svg></div>
<div class="app run"><svg width="24" height="24"><rect width="24" height="24" rx="5" fill="#111"/><g fill="none" stroke-width="3"><path d="M3 8q0 9 5 9 4 0 4-7" stroke="#147bea"/><path d="M4 8q5-4 7 4 2 6 5 5 5-1 5-8" stroke="#26b0e5"/><path d="M13 9q3-5 7-1" stroke="#42d35a"/></g></svg></div>
<div class="app run"><svg width="29" height="29" viewBox="0 0 29 29" style="left:2px;top:-3px"><use href="#chrome" x="0" y="5" width="24" height="24"/><circle cx="21" cy="8" r="8" fill="#d2e0f6"/><circle cx="21" cy="5.500" r="2.700" fill="#1d57b5"/><path d="M16 13q0-4 5-4t5 4z" fill="#1d57b5"/></svg></div>
<div class="app active"><svg width="24" height="24"><rect width="24" height="24" rx="5" fill="#2f45bd"/><text x="3" y="19" font-size="18" font-weight="700" fill="#fff" textLength="18">Ki</text><circle cx="18" cy="6" r="2.500" fill="#f06423"/></svg></div>
<div class="tray d-flex align-items-center">
<svg width="12" height="12" fill="none" stroke="#222" stroke-width="1.500"><path d="M1 9l5-5 5 5"/></svg>
<svg width="16" height="12" style="margin-left:18px" fill="none" stroke="#222"><rect x=".500" y=".500" width="15" height="11" rx="2"/><path d="M3 4h10M3 6.500h10" stroke-dasharray="1.500 1.500"/><path d="M5 9h6"/></svg>
<div class="text-center" style="margin-left:18px;width:24px">ENG<br>IN</div>
<svg width="18" height="18" style="margin-left:17px" fill="none" stroke="#222" stroke-width="1.200"><path d="M11 2H1v12h13v-5M4 17h8M8 14v3M13 1h4v5h-4zM15 6v4"/></svg>
<svg width="16" height="14" style="margin-left:7px" fill="none" stroke="#222" stroke-width="1.100"><path d="M1 5h2l4-3.500v11L3 9H1zM10 5l4.500 4.500M14.500 5L10 9.500"/></svg>
<div class="text-end" style="margin-left:16px;width:63px;letter-spacing:-.05px">08:16<br>27-02-2025</div>
</div>
</footer>

<script src="https://cdn.jsdelivr.net/npm/bootstrap@5.3.0/dist/js/bootstrap.bundle.min.js"></script>
<script>
const $ = id => document.getElementById(id);
// menu entries with the width of each cell
$('menubar').innerHTML = [['File',32],['Edit',34],['View',39],['Place',42],['Route',45],['Inspect',52],['Tools',41],['Preferences',75],['Help',40]]
  .map(([t,w]) => `<span style="width:${w}px">${t}</span>`).join('');

// layer manager
const layers = [['F.Cu','#c83434'],['B.Cu','#4d7fc4'],['F.Adhesive','#840084'],['B.Adhesive','#000084'],['F.Paste','#a3948c'],['B.Paste','#00b1b1'],['F.Silkscreen','#f2eda1'],['B.Silkscreen','#e8b2a7'],['F.Mask','#6b3d7c','#532963'],['B.Mask','#127c73','#02645d'],['User.Drawings','#c2c2c2'],['User.Comments','#5994dc'],['User.Eco1','#b4dbd2'],['User.Eco2','#d8c852'],['Edge.Cuts','#d0d2cd'],['Margin','#ff26e2'],['F.Courtyard','#ff26e2'],['B.Courtyard','#26e9ff'],['F.Fab','#afafaf'],['B.Fab','#585d84'],['User.1','#c2c2c2'],['User.2','#5994dc'],['User.3','#b4dbd2'],['User.4','#d8c852'],['User.5','#c2c2c2'],['User.6','#5994dc'],['User.7','#b4dbd2'],['User.8','#d8c852'],['User.9','#e8b2a7']];
$('layers').innerHTML = layers.map(([n,a,b],i) => `<div class="layer d-flex align-items-center${i?'':' on'}"><span class="arrow">${i?'':'<svg width="6" height="9"><path d="M0 0l6 4.500-6 4.500z" fill="#3f48f5"/></svg>'}</span><span class="swatch" style="background:${b?`repeating-conic-gradient(${b} 0 25%,${a} 0 50%) 0 0/8px 8px`:a}"></span><svg class="eye" width="16" height="16"><use href="#eye"/></svg><span>${n}</span></div>`).join('');

// selection filter
const tick = on => `<span class="tick${on?'':' off'}">${on?'<svg width="13" height="13"><path d="M3.500 6.500l2.200 2.200 4-4.200" fill="none" stroke="#cfe4f7"/></svg>':''}</span>`;
$('filters').innerHTML = [['All items','Locked items'],['Footprints','Text'],['Tracks','Vias'],['Pads','Graphics'],['Zones','Rule Areas'],['Dimensions','Other items']]
  .map(([a,b],i) => `<div class="filter d-flex"><div class="half d-flex align-items-center">${tick(1)}${a}</div><div class="half d-flex align-items-center">${tick(i>0)}${b}</div></div>`).join('');

// canvas grid: every tenth line is major
let minor = '', major = '';
for (let c = 0; c < 40; c++) for (let r = -1; r < 20; r++) {
  const x = Math.floor(57.3 + 41.8*c), y = Math.floor(152.2 + 41.76*r);
  const mc = c % 10 === 3, mr = (r + 4) % 10 === 0;
  if (mc && mr) major += `M${x-1} ${y-1}h3v3h-3z`;
  else if (mc) minor += `M${x-1} ${y}h3v1h-3z`;
  else if (mr) minor += `M${x} ${y-1}h1v3h-1z`;
  else minor += `M${x} ${y}h1v1h-1z`;
}
$('gridDots').setAttribute('d', minor); $('majorDots').setAttribute('d', major);

// footprints
const gold = '#e3b72e', bg = '#001023';
$('holes').innerHTML = [[177,129],[618,140],[177,594],[630,567]].map(([x,y]) => `<circle cx="${x}" cy="${y}" r="53" stroke="${gold}" stroke-width="2.500"/><circle cx="${x}" cy="${y}" r="37" stroke="${gold}" stroke-width="22"/><circle cx="${x}" cy="${y}" r="49" stroke="#8fa6b5" stroke-width="2" stroke-dasharray="8 6"/><text x="${x}" y="${y+18}" text-anchor="middle" font-family="Liberation Mono" font-size="54" fill="#e4e6ea">1</text>`).join('');
$('leds').innerHTML = [[328,73,129],[331,211,267],[331,349,405]].map(([x,t,y]) => `<path d="M${x} ${t}H452V${t+111}H${x}z" stroke="#ff26e2" stroke-width="3"/><circle cx="391" cy="${y}" r="49" stroke="#f2eda1" stroke-width="4"/><circle cx="391" cy="${y}" r="38" stroke="#c9c8a0" stroke-width="4"/><circle cx="391" cy="${y}" r="44" stroke="#8c8f94" stroke-width="2"/>`).join('');
$('resistors').innerHTML = [[330,603],[392,603],[453,606]].map(([x,y]) => `<path d="M${x-28} ${y-23}h54v174h-54z" stroke="#ff26e2" stroke-width="3"/><path d="M${x-23} ${y+20}h46v88h-46z" stroke="#f2eda1" stroke-width="3.500"/><path d="M${x-19} ${y+22}v84M${x+19} ${y+22}v84" stroke="#aaa" stroke-width="2.500"/>`).join('');
$('smd').innerHTML = [[306,898],[432,898],[369,979],[495,979]].map(([x,y]) => `<rect x="${x-17}" y="${y-36}" width="34" height="74" rx="6" stroke="#c83434" stroke-width="3"/><path d="M${x-12} ${y-31}h24v63h-24z" fill="#c83434"/>`).join('');
$('padsTop').innerHTML = [129,267,405].map(y => `<path d="M332 ${y}q4-27 28-28 27 1 29 28-2 27-29 28-24-1-28-28z" fill="${gold}"/><circle cx="360" cy="${y}" r="12" fill="${bg}"/><rect x="395" y="${y-29}" width="56" height="58" rx="6" stroke="${gold}" stroke-width="3"/><rect x="401" y="${y-24}" width="45" height="48" fill="${gold}"/><circle cx="423" cy="${y}" r="12" fill="${bg}"/>`).join('')
 + [[330,603],[392,603],[453,606],[330,733],[392,733],[453,735]].map(([x,y]) => `<circle cx="${x}" cy="${y}" r="24" stroke="${gold}" stroke-width="2.500"/><circle cx="${x}" cy="${y}" r="14" fill="${bg}" stroke="${gold}" stroke-width="8"/>`).join('');
</script>
</body>
</html>
